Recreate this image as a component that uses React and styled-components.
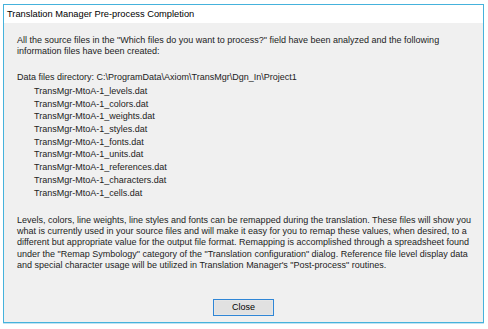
import React from "react";
import styled, { createGlobalStyle } from "styled-components";

const GlobalStyle = createGlobalStyle`
  html, body {
    margin: 0;
    padding: 0;
    background: #ffffff;
  }
  body {
    font-family: "Liberation Sans", Arial, sans-serif;
  }
`;

const files = [
  "levels",
  "colors",
  "weights",
  "styles",
  "fonts",
  "units",
  "references",
  "characters",
  "cells",
];

export default function App() {
  return (
    <>
      <GlobalStyle />
      <Page>
        <Window>
          <TitleBar>Translation Manager Pre-process Completion</TitleBar>
          <Content>
            <Text>
              All the source files in the "Which files do you want to process?" field have been analyzed and the following
              <br />
              information files have been created:
            </Text>
            <Directory>
              Data files directory: {"C:\\ProgramData\\Axiom\\TransMgr\\Dgn_In\\Project1"}
            </Directory>
            <FileList>
              {files.map((f) => (
                <FileItem key={f}>TransMgr-MtoA-1_{f}.dat</FileItem>
              ))}
            </FileList>
            <Notes>
              Levels, colors, line weights, line styles and fonts can be remapped during the translation. These files will show you
              <br />
              what is currently used in your source files and will make it easy for you to remap these values, when desired, to a
              <br />
              different but appropriate value for the output file format. Remapping is accomplished through a spreadsheet found
              <br />
              under the "Remap Symbology" category of the "Translation configuration" dialog. Reference file level display data
              <br />
              and special character usage will be utilized in Translation Manager's "Post-process" routines.
            </Notes>
            <Footer>
              <Button>Close</Button>
            </Footer>
          </Content>
        </Window>
      </Page>
    </>
  );
}

const Page = styled.div`
  width: 488px;
  height: 329px;
  box-sizing: border-box;
  padding: 4px 0 0 3px;
`;

const Window = styled.div`
  width: 481px;
  height: 319px;
  box-sizing: border-box;
  border: 1px solid #45b2dc;
  box-shadow: 0 1px 0 #bfe4f2;
  display: flex;
  flex-direction: column;
`;

const TitleBar = styled.div`
  height: 18px;
  line-height: 18px;
  padding-left: 3px;
  background: #ffffff;
  color: #000;
  font-size: 9.3px;
  white-space: nowrap;
`;

const Content = styled.div`
  flex: 1;
  background: #f0f0f0;
  padding: 12px 0 0 13px;
  display: flex;
  flex-direction: column;
  font-size: 9px;
  line-height: 11.3px;
  color: #1c1c1c;
  white-space: nowrap;
`;

const Text = styled.div``;

const Directory = styled.div`
  margin-top: 14.6px;
  line-height: 11.3px;
`;

const FileList = styled.div`
  display: flex;
  flex-direction: column;
  padding-left: 17px;
  margin-top: 1.4px;
`;

const FileItem = styled.div`
  line-height: 12.7px;
`;

const Notes = styled.div`
  margin-top: 15.7px;
`;

const Footer = styled.div`
  display: flex;
  justify-content: center;
  margin-top: 27.4px;
  padding-right: 13px;
`;

const Button = styled.button`
  width: 61px;
  height: 17px;
  box-sizing: border-box;
  padding: 0;
  border: 1px solid #2f86d6;
  background: #e1e1e1;
  box-shadow: inset 0 0 0 1px #e6e6e6;
  font-family: "Liberation Sans", Arial, sans-serif;
  font-size: 9px;
  color: #000;
`;
